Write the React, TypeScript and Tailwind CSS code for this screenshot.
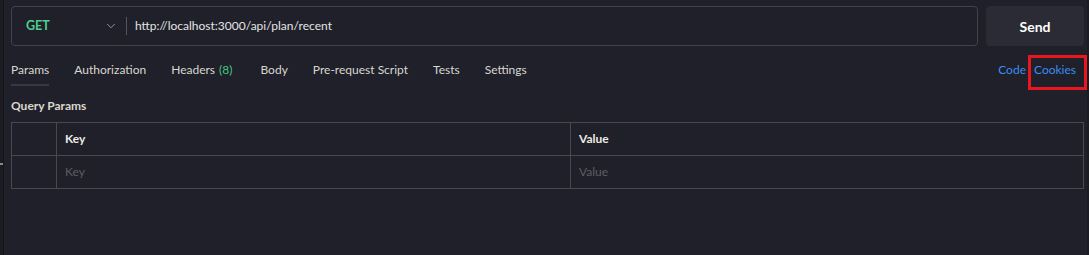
import React from "react";
import { ChevronDown } from "lucide-react";

const tabs = [
  { label: "Params", active: true },
  { label: "Authorization" },
  { label: "Headers", count: "(8)" },
  { label: "Body" },
  { label: "Pre-request Script" },
  { label: "Tests" },
  { label: "Settings" },
];

export default function App() {
  return (
    <div
      className="w-[1089px] h-[255px] bg-[#1f2029] flex text-[12px] text-[#d9d7d0] overflow-hidden"
      style={{ fontFamily: 'Lato, "Noto Sans", Arial, sans-serif' }}
    >
      <div className="w-[3px] bg-[#1b1c22] relative shrink-0">
        <div className="absolute left-0 top-[163px] w-[3px] h-[2px] bg-[#8a8a8a]" />
      </div>
      <div className="w-px bg-[#141419] shrink-0" />
      <div className="flex-1 flex flex-col pl-[7px] pr-[3px]">
        {/* URL bar */}
        <div className="flex gap-[8px] mt-[6px] h-[40px]">
          <div className="flex-1 flex items-center border border-[#434348] rounded-[4px]">
            <div className="w-[114px] flex items-center justify-between pl-[14px] pr-[8px]">
              <span className="text-[#4fcf8c] font-bold text-[12.5px]">GET</span>
              <ChevronDown size={14} strokeWidth={1.5} className="text-[#a0a0a8]" />
            </div>
            <div className="w-px h-[18px] bg-[#55555c]" />
            <span className="ml-[8px] text-[#e4e4e4]">http://localhost:3000/api/plan/recent</span>
          </div>
          <button className="w-[98px] bg-[#2a2b35] rounded-[4px] text-white font-bold text-[14px]">
            Send
          </button>
        </div>
        {/* Tabs */}
        <div className="flex items-start justify-between mt-[9px]">
          <div className="flex gap-[25px] pt-[5px]">
            {tabs.map((t) => (
              <div
                key={t.label}
                className={`flex flex-col ${t.label === "Body" ? "ml-[3px]" : ""}`}
              >
                <span className="leading-[20px] whitespace-nowrap">
                  {t.label}
                  {t.count && <span className="text-[#48c584] ml-[4px]">{t.count}</span>}
                </span>
                <div className={`h-[2px] mt-[4px] ${t.active ? "bg-[#373845]" : "bg-transparent"}`} />
              </div>
            ))}
          </div>
          <div className="flex items-start text-[#3c8cf0] -mr-[3px]">
            <span className="leading-[20px] mr-[2px] pt-[5px]">Code</span>
            <span className="border-[3px] border-[#e8161f] pl-[3px] pr-[8px] pt-[2px] pb-[7px] leading-[20px]">
              Cookies
            </span>
          </div>
        </div>
        {/* Query params */}
        <div className="mt-[8px] text-[12px] font-bold leading-[16px] text-[#dcd8cc]">Query Params</div>
        <div className="mt-[8px] border border-[#48484d] flex flex-col">
          <div className="flex h-[33px] border-b border-[#48484d]">
            <div className="w-[45px] border-r border-[#48484d]" />
            <div className="w-[514px] border-r border-[#48484d] flex items-center pl-[8px] font-bold text-[12px] text-[#ecebe6]">
              Key
            </div>
            <div className="flex-1 flex items-center pl-[8px] font-bold text-[12px] text-[#ecebe6]">Value</div>
          </div>
          <div className="flex h-[32px]">
            <div className="w-[45px] border-r border-[#48484d]" />
            <div className="w-[514px] border-r border-[#48484d] flex items-center pl-[8px] text-[12px] text-[#5e5e64]">
              Key
            </div>
            <div className="flex-1 flex items-center pl-[8px] text-[12px] text-[#5e5e64]">Value</div>
          </div>
        </div>
      </div>
      <div className="w-[2px] bg-[#1b1c22] shrink-0" />
    </div>
  );
}
